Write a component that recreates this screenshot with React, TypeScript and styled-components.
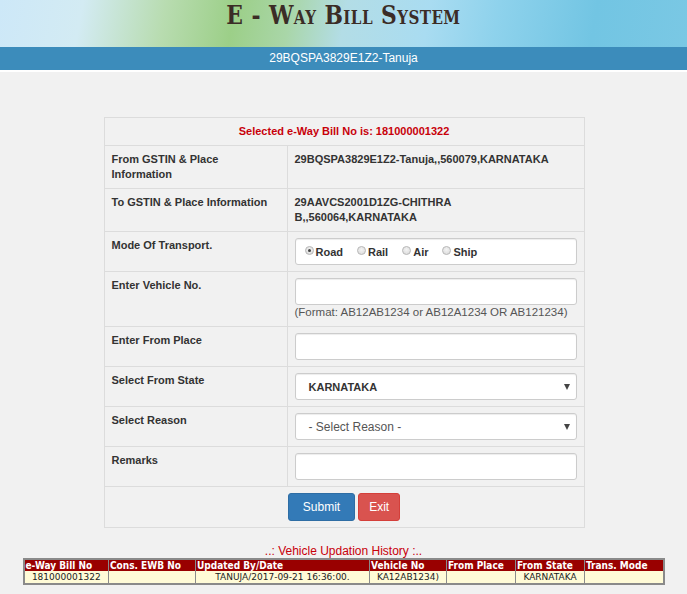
import React from "react";
import styled, { createGlobalStyle } from "styled-components";

const GlobalStyle = createGlobalStyle`
  html, body { margin: 0; padding: 0; background: #f1f1f1; }
  body { font-family: "Liberation Sans", Arial, sans-serif; color: #333; }
  * { box-sizing: border-box; }
`;

const Banner = styled.div`
  height: 47px;
  background: linear-gradient(100deg, #cde8f8 0%, #d3ebf3 12%, #b8dcb0 24%, #9ccf88 34%, #a9d6a8 42%, #b3dde6 50%, #a9dcf1 62%, #8ed2ec 72%, #72c5e3 86%, #7ac8e4 100%);
  display: flex;
  justify-content: center;
  align-items: flex-start;
`;

const Title = styled.h1`
  margin: 0;
  padding-top: 1px;
  font-family: "DejaVu Serif", "Liberation Serif", serif;
  font-variant: small-caps;
  font-weight: bold;
  font-size: 26px;
  line-height: 28px;
  letter-spacing: 0.5px;
  color: #3b2c26;
  transform: scaleX(0.84);
  white-space: nowrap;
`;

const UserBar = styled.div`
  height: 23px;
  background: #3c8cbb;
  color: #fff;
  font-size: 12px;
  line-height: 23px;
  text-align: center;
  border-bottom: 2px solid #fff;
  box-sizing: content-box;
`;

const Main = styled.div`
  padding-top: 45px;
  display: flex;
  flex-direction: column;
  align-items: center;
`;

const FormTable = styled.table`
  width: 481px;
  margin-left: 1px;
  border-collapse: collapse;
  border: 1px solid #dcdcdc;
  font-size: 11px;
  line-height: 15px;
`;

const Cell = styled.td<{ $label?: boolean; $center?: boolean }>`
  border: 1px solid #dcdcdc;
  padding: 6px 7px;
  vertical-align: top;
  width: ${(p) => (p.$label ? "183px" : "auto")};
  font-weight: bold;
  color: #333;
  text-align: ${(p) => (p.$center ? "center" : "left")};
`;

const Selected = styled.span`
  color: #c8000a;
  font-weight: bold;
`;

const Field = styled.div`
  height: 27px;
  width: 100%;
  background: #fff;
  border: 1px solid #ccc;
  border-radius: 3px;
  box-shadow: inset 0 1px 1px rgba(0, 0, 0, 0.075);
  display: flex;
  align-items: center;
  padding: 0 13px;
  position: relative;
  font-weight: bold;
  font-size: 11px;
  color: #333;
`;

const RadioGroup = styled(Field)`
  padding: 0 9px;
`;

const RadioItem = styled.label`
  display: inline-flex;
  align-items: center;
  margin-right: 14px;
  font-weight: bold;
  font-size: 11px;
  color: #333;
  padding-top: 2px;
`;

const RadioDot = styled.span<{ $on?: boolean }>`
  width: 9px;
  height: 9px;
  border-radius: 50%;
  border: 1px solid #b9b9b9;
  background: radial-gradient(circle at 50% 40%, #f4f4f4 0%, #d7d7d7 100%);
  margin-right: 2px;
  margin-top: -4px;
  display: inline-flex;
  align-items: center;
  justify-content: center;
  &::after {
    content: "";
    width: 3px;
    height: 3px;
    border-radius: 50%;
    background: ${(p) => (p.$on ? "#444" : "transparent")};
  }
`;

const Hint = styled.div`
  font-weight: normal;
  font-size: 11.5px;
  line-height: 15px;
  color: #555;
  white-space: nowrap;
`;

const Caret = styled.span`
  position: absolute;
  right: 6px;
  top: 10px;
  width: 0;
  height: 0;
  border-left: 3.5px solid transparent;
  border-right: 3.5px solid transparent;
  border-top: 6px solid #444;
`;

const SelectText = styled.span<{ $muted?: boolean }>`
  color: ${(p) => (p.$muted ? "#555" : "#333")};
  font-weight: ${(p) => (p.$muted ? "normal" : "bold")};
  font-size: ${(p) => (p.$muted ? "12px" : "11px")};
  padding-top: 2px;
`;

const ButtonRow = styled.div`
  display: flex;
  justify-content: center;
  gap: 3px;
`;

const Button = styled.button<{ $variant: "primary" | "danger" }>`
  height: 28px;
  border-radius: 3px;
  border: 1px solid ${(p) => (p.$variant === "primary" ? "#2e6da4" : "#d43f3a")};
  background: ${(p) => (p.$variant === "primary" ? "#337ab7" : "#d9534f")};
  color: #fff;
  font-family: "Liberation Sans", Arial, sans-serif;
  font-size: 12px;
  padding: ${(p) => (p.$variant === "primary" ? "0 14px" : "0 10px")};
  cursor: pointer;
`;

const HistoryTitle = styled.div`
  margin-top: 16px;
  color: #c8000a;
  font-size: 12px;
  line-height: 14px;
  text-align: center;
  width: 100%;
`;

const HistoryTable = styled.table`
  margin-top: 0;
  width: 640px;
  border-collapse: collapse;
  border: 2px solid #8a8a8a;
  font-family: "DejaVu Sans Condensed", "DejaVu Sans", Tahoma, sans-serif;
  font-size: 10px;
  table-layout: fixed;
`;

const Th = styled.th<{ $w: number }>`
  width: ${(p) => p.$w}px;
  background: #990000;
  color: #fff;
  text-align: left;
  font-weight: bold;
  padding: 0 0 0 1px;
  height: 11px;
  line-height: 11px;
  border-left: 1px solid #8a8a8a;
  white-space: nowrap;
  overflow: hidden;
  font-stretch: condensed;
`;

const Td = styled.td`
  background: #fffbd7;
  color: #222;
  text-align: center;
  font-weight: normal;
  font-family: "DejaVu Sans", Tahoma, sans-serif;
  font-size: 9px;
  height: 13px;
  line-height: 12px;
  padding: 0;
  border-left: 1px solid #8a8a8a;
  white-space: nowrap;
`;

export default function App() {
  const cols = [
    { h: "e-Way Bill No", w: 85, v: "181000001322" },
    { h: "Cons. EWB No", w: 87, v: "" },
    { h: "Updated By/Date", w: 174, v: "TANUJA/2017-09-21 16:36:00." },
    { h: "Vehicle No", w: 77, v: "KA12AB1234)" },
    { h: "From Place", w: 69, v: "" },
    { h: "From State", w: 69, v: "KARNATAKA" },
    { h: "Trans. Mode", w: 79, v: "" },
  ];
  return (
    <>
      <GlobalStyle />
      <Banner>
        <Title>E - Way Bill System</Title>
      </Banner>
      <UserBar>29BQSPA3829E1Z2-Tanuja</UserBar>
      <Main>
        <FormTable>
          <tbody>
            <tr>
              <Cell colSpan={2} $center>
                <Selected>Selected e-Way Bill No is: 181000001322</Selected>
              </Cell>
            </tr>
            <tr>
              <Cell $label>From GSTIN &amp; Place Information</Cell>
              <Cell>29BQSPA3829E1Z2-Tanuja,,560079,KARNATAKA</Cell>
            </tr>
            <tr>
              <Cell $label>To GSTIN &amp; Place Information</Cell>
              <Cell>
                29AAVCS2001D1ZG-CHITHRA
                <br />
                B,,560064,KARNATAKA
              </Cell>
            </tr>
            <tr>
              <Cell $label>Mode Of Transport.</Cell>
              <Cell>
                <RadioGroup>
                  <RadioItem>
                    <RadioDot $on />
                    Road
                  </RadioItem>
                  <RadioItem>
                    <RadioDot />
                    Rail
                  </RadioItem>
                  <RadioItem>
                    <RadioDot />
                    Air
                  </RadioItem>
                  <RadioItem>
                    <RadioDot />
                    Ship
                  </RadioItem>
                </RadioGroup>
              </Cell>
            </tr>
            <tr>
              <Cell $label>Enter Vehicle No.</Cell>
              <Cell>
                <Field />
                <Hint>(Format: AB12AB1234 or AB12A1234 OR AB121234)</Hint>
              </Cell>
            </tr>
            <tr>
              <Cell $label>Enter From Place</Cell>
              <Cell>
                <Field />
              </Cell>
            </tr>
            <tr>
              <Cell $label>Select From State</Cell>
              <Cell>
                <Field>
                  <SelectText>KARNATAKA</SelectText>
                  <Caret />
                </Field>
              </Cell>
            </tr>
            <tr>
              <Cell $label>Select Reason</Cell>
              <Cell>
                <Field>
                  <SelectText $muted>- Select Reason -</SelectText>
                  <Caret />
                </Field>
              </Cell>
            </tr>
            <tr>
              <Cell $label>Remarks</Cell>
              <Cell>
                <Field />
              </Cell>
            </tr>
            <tr>
              <Cell colSpan={2}>
                <ButtonRow>
                  <Button $variant="primary">Submit</Button>
                  <Button $variant="danger">Exit</Button>
                </ButtonRow>
              </Cell>
            </tr>
          </tbody>
        </FormTable>
        <HistoryTitle>..: Vehicle Updation History :..</HistoryTitle>
        <HistoryTable>
          <thead>
            <tr>
              {cols.map((c) => (
                <Th key={c.h} $w={c.w}>
                  {c.h}
                </Th>
              ))}
            </tr>
          </thead>
          <tbody>
            <tr>
              {cols.map((c) => (
                <Td key={c.h}>{c.v}</Td>
              ))}
            </tr>
          </tbody>
        </HistoryTable>
      </Main>
    </>
  );
}
